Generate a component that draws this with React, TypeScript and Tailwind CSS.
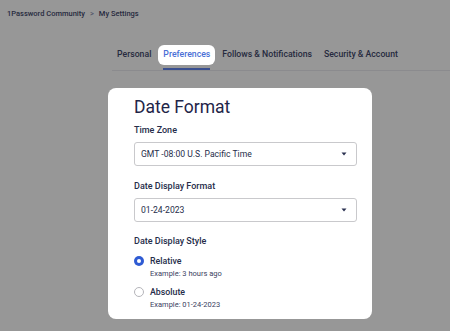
import React from 'react';

const tabs = ['Personal', 'Preferences', 'Follows & Notifications', 'Security & Account'];

const Caret = () => (
  <svg width="6" height="4" viewBox="0 0 6 4" className="text-[#2a3150]">
    <path d="M0.5 0.5 L5.5 0.5 L3 3.5 Z" fill="currentColor" />
  </svg>
);

const Select: React.FC<{ value: string }> = ({ value }) => (
  <div className="w-[223px] h-[24px] rounded-[3px] border border-[#c9c9cc] bg-white flex items-center justify-between pl-[6px] pr-[9px]">
    <span className="text-[8.6px] text-[#262d4a] leading-none">{value}</span>
    <Caret />
  </div>
);

const Radio: React.FC<{ checked?: boolean; label: string; example: string }> = ({ checked, label, example }) => (
  <div className="flex items-start gap-[6px]">
    {checked ? (
      <div className="mt-[1px] w-[10px] h-[10px] rounded-full bg-[#2f5bd3] flex items-center justify-center">
        <div className="w-[4px] h-[4px] rounded-full bg-white" />
      </div>
    ) : (
      <div className="mt-[1px] w-[10px] h-[10px] rounded-full border border-[#b5b5ba] bg-white" />
    )}
    <div>
      <div className="text-[8.8px] leading-[12px] font-medium text-[#262d4a]">{label}</div>
      <div className="mt-[2px] text-[7.5px] leading-[10px] text-[#3a4160]">{example}</div>
    </div>
  </div>
);

export default function App() {
  return (
    <div className="w-[450px] h-[331px] overflow-hidden bg-[#979797]" style={{ fontFamily: 'Roboto, "Liberation Sans", sans-serif' }}>
      <div className="pt-[8px] pl-[7px] flex items-center gap-[5px] text-[7.5px] leading-[12px] font-medium text-[#262a3e]">
        <span>1Password Community</span>
        <span className="text-[#55586a]">&gt;</span>
        <span>My Settings</span>
      </div>

      <div className="mt-[25px] ml-[112px] flex gap-[2px] border-b border-[#8b8b8e] whitespace-nowrap">
        {tabs.map((t) => {
          const active = t === 'Preferences';
          return (
            <div key={t} className="flex flex-col">
              <div
                className={`h-[20px] px-[5px] flex items-center rounded-[6px] text-[8.7px] font-medium ${
                  active ? 'bg-white text-[#4a6fd6]' : 'text-[#262a3e]'
                }`}
              >
                {t}
              </div>
              <div className={`mt-[3px] mx-[5px] h-[2px] ${active ? 'bg-[#3a4f8f]' : ''}`} />
            </div>
          );
        })}
      </div>

      <div className="mt-[17px] ml-[108px] w-[264px] h-[231px] bg-white rounded-[8px] pl-[26px] pt-[9px]">
        <div className="text-[17.5px] leading-[20px] text-[#1f2548]">Date Format</div>

        <div className="mt-[7px] text-[9px] leading-[12px] font-medium text-[#262d4a]">Time Zone</div>
        <div className="mt-[6px]">
          <Select value="GMT -08:00 U.S. Pacific Time" />
        </div>

        <div className="mt-[14px] text-[9px] leading-[12px] font-medium text-[#262d4a]">Date Display Format</div>
        <div className="mt-[6px]">
          <Select value="01-24-2023" />
        </div>

        <div className="mt-[13px] text-[9px] leading-[12px] font-medium text-[#262d4a]">Date Display Style</div>
        <div className="mt-[8px] flex flex-col gap-[7px]">
          <Radio checked label="Relative" example="Example: 3 hours ago" />
          <Radio label="Absolute" example="Example: 01-24-2023" />
        </div>
      </div>
    </div>
  );
}
